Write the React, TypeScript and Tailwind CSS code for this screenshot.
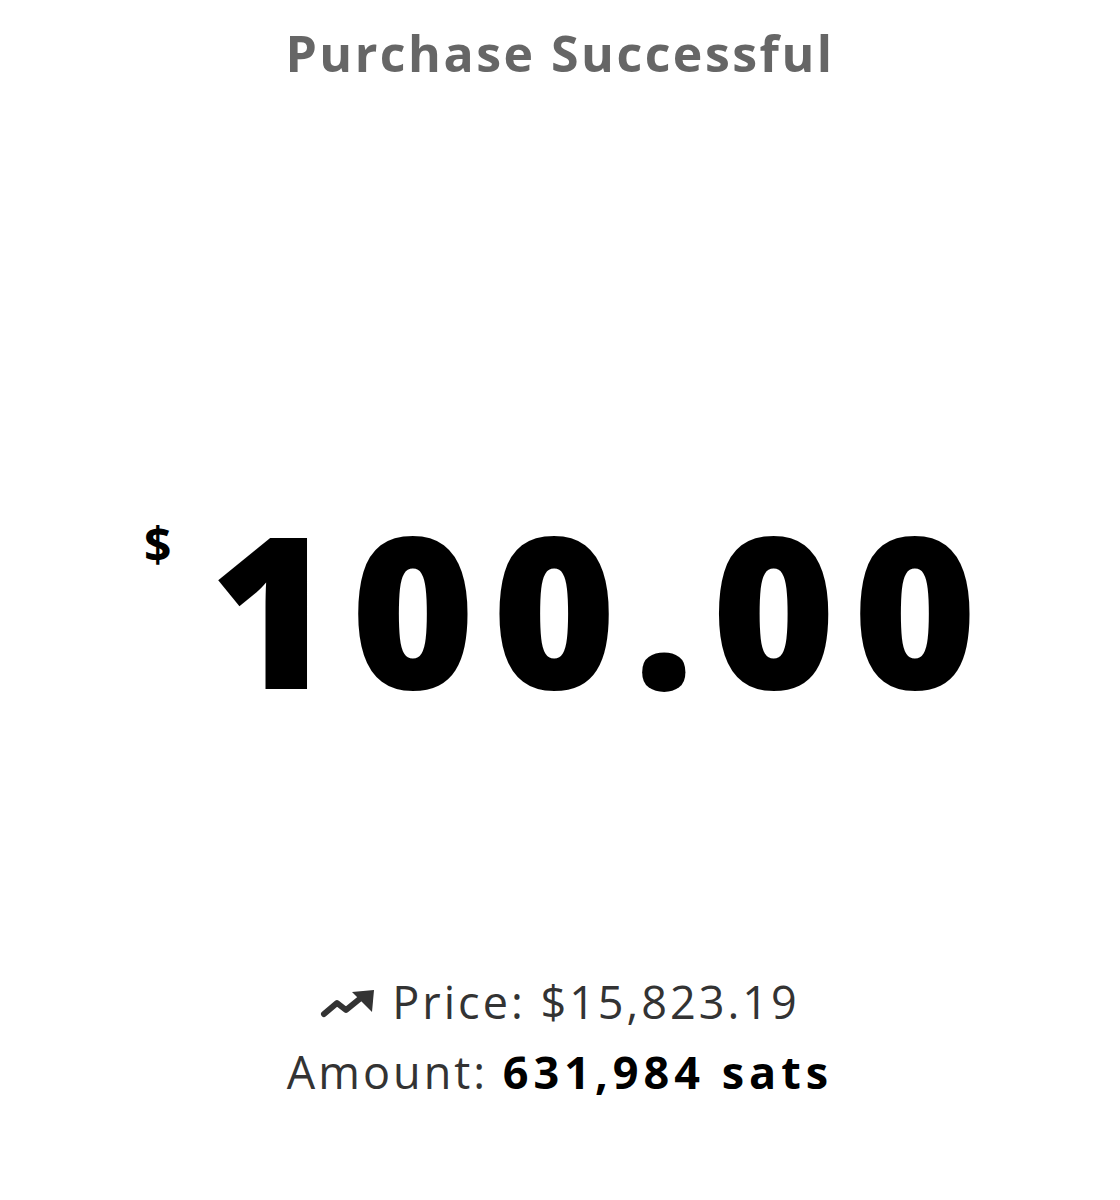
export default function App() {
  return (
    <div
      className="flex h-[1200px] w-[1120px] flex-col items-center bg-white"
      style={{ fontFamily: '"Open Sans", "DejaVu Sans", sans-serif' }}
    >
      <h1 className="mt-[20px] text-[50px] leading-[66px] font-bold tracking-[2.5px] text-[#666666]">
        Purchase Successful
      </h1>

      <div className="flex flex-1 items-center justify-center pt-[154px]">
        <div className="ml-[18px] flex items-start">
          <span className="mt-[19px] mr-[38px] text-[48px] leading-none font-bold text-black">$</span>
          <span className="text-[212px] leading-none font-extrabold tracking-[17px] text-black">
            100.00
          </span>
        </div>
      </div>

      <div className="mb-[92px] flex flex-col items-center tracking-[3px] text-[#333333]">
        <div className="mb-[6px] flex items-center gap-[16px] text-[45px] leading-[56px]">
          <svg width="56" height="30" viewBox="0 0 56 30" className="mt-[4px]">
            <polyline
              points="4,25 17,14 26,21 42,8"
              fill="none"
              stroke="#333333"
              strokeWidth="6"
              strokeLinecap="round"
              strokeLinejoin="round"
            />
            <polygon points="32,3 54,1 52,23" fill="#333333" />
          </svg>
          <span>Price: $15,823.19</span>
        </div>
        <div className="text-[45px] leading-[72px]">
          Amount: <span className="font-bold tracking-[5px] text-black">631,984 sats</span>
        </div>
      </div>
    </div>
  )
}
